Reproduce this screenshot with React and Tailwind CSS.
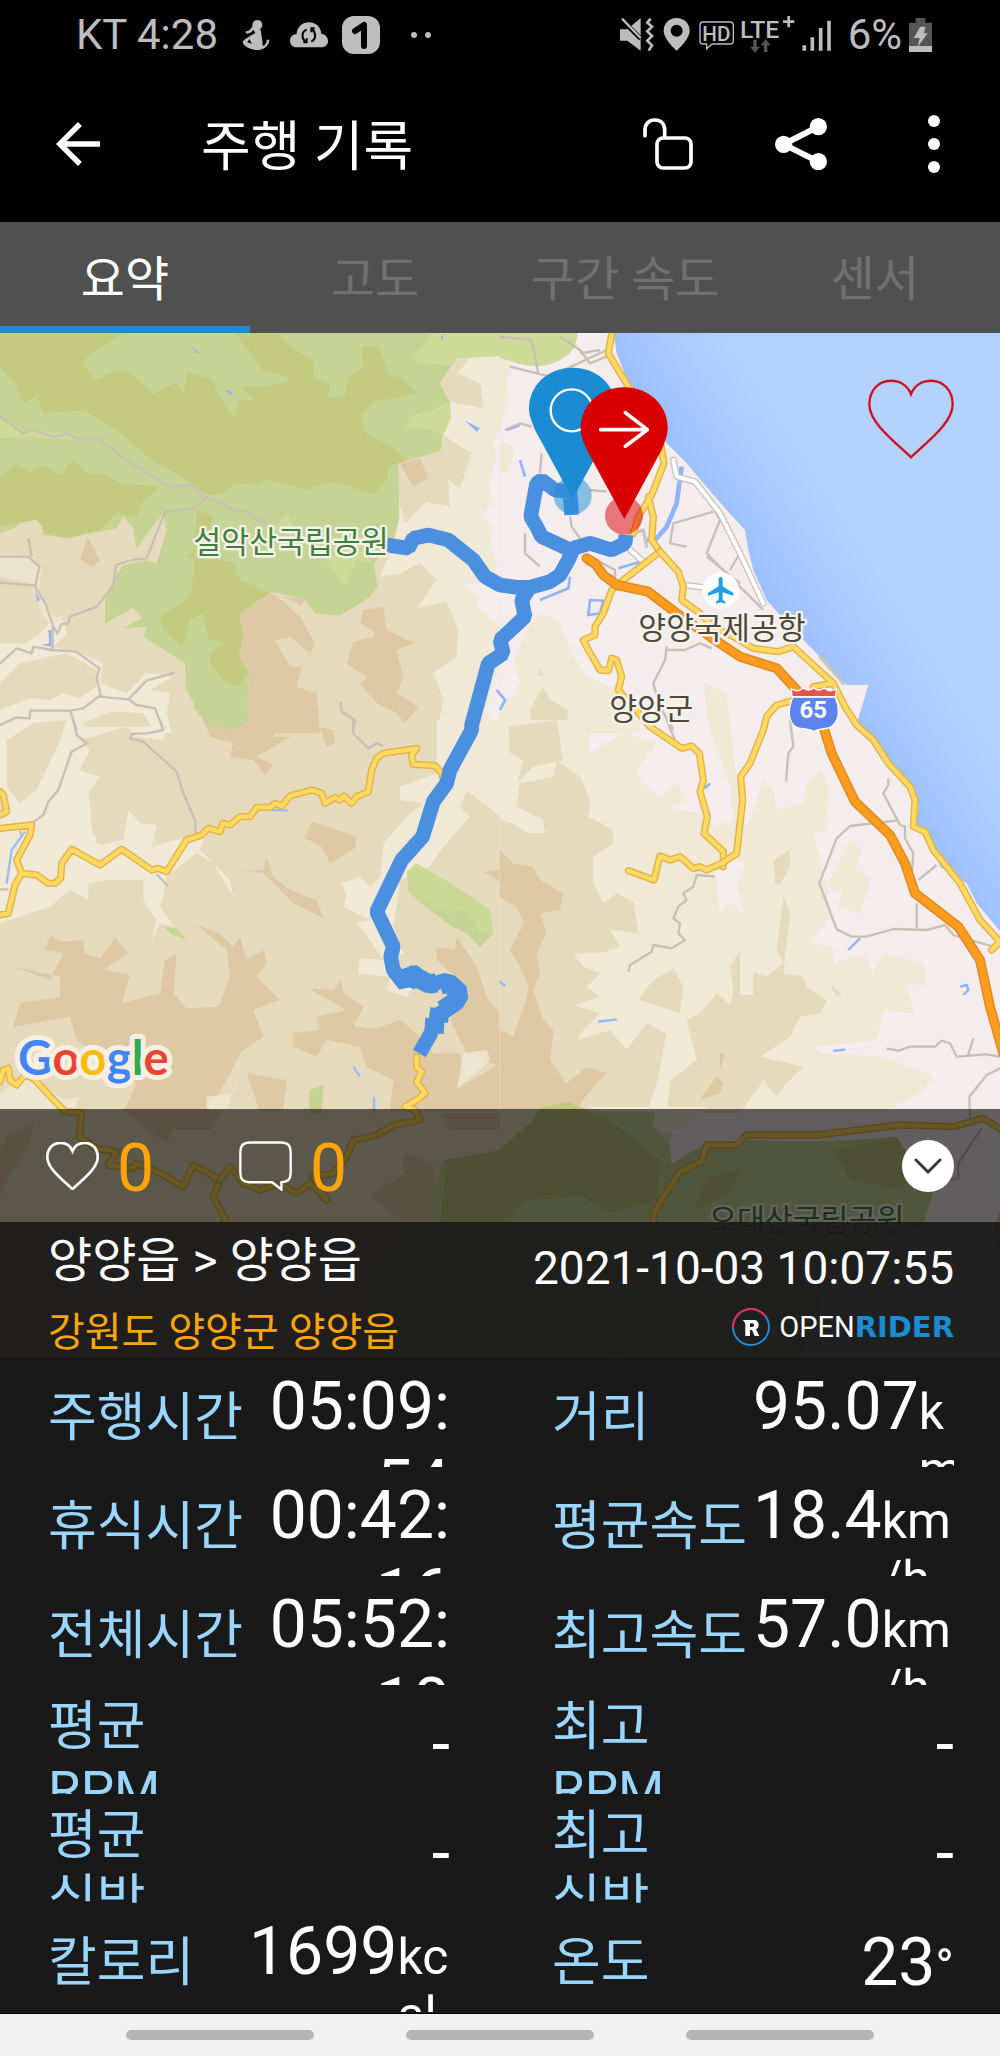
import React, { useState } from 'react';
import { MdArrowBack } from 'react-icons/md';

const tabs = ['요약', '고도', '구간 속도', '센서'];

const stats = [
  { label: '주행시간', value: '05:09:54' },
  { label: '거리', value: '95.07', unit: 'km' },
  { label: '휴식시간', value: '00:42:16' },
  { label: '평균속도', value: '18.4', unit: 'km/h' },
  { label: '전체시간', value: '05:52:10' },
  { label: '최고속도', value: '57.0', unit: 'km/h' },
  { label: '평균 RPM', value: '-' },
  { label: '최고 RPM', value: '-' },
  { label: '평균 심박', value: '-' },
  { label: '최고 심박', value: '-' },
  { label: '칼로리', value: '1699', unit: 'kcal' },
  { label: '온도', value: '23', unit: '°' },
];

const heartPath =
  'M128 232C80 186 4 130 4 75C4 32 32 4 68 4C95 4 118 18 128 44C138 18 161 4 188 4C224 4 252 32 252 75C252 130 176 186 128 232Z';

function StatusBar() {
  return (
    <div className="flex h-[70px] items-center justify-between pr-[68px] pl-[76px] text-[42px] leading-[50px] text-[#bdbdbd]">
      <div className="flex items-center">
        <span className="mr-6">KT 4:28</span>
        <svg className="mr-5 h-8 w-7" viewBox="0 0 84 96" fill="currentColor" aria-hidden="true">
          <circle cx="46" cy="18" r="15" />
          <path d="M36 14C26 34 20 34 10 38L14 44C26 42 30 38 34 32L40 42C22 52 4 62 2 70C4 80 20 92 46 93C64 93 82 80 82 62L74 62C74 74 68 80 62 80C62 66 58 46 56 34Z" />
          <path d="M22 60L30 74L16 70Z" fill="#000" />
        </svg>
        <svg className="mr-[14px] h-[26px] w-[38px]" viewBox="0 0 114 76" fill="currentColor" aria-hidden="true">
          <path d="M22 75C8 75 0 66 0 55C0 44 8 36 20 35C20 14 38 0 57 0C76 0 92 13 94 34C106 36 114 44 114 56C114 68 104 75 92 75Z" />
          <path d="M50 22C34 28 34 48 46 58M40 60H50V48M64 58C80 50 78 30 66 20M74 18H64V30" fill="none" stroke="#000" strokeWidth="6" />
        </svg>
        <svg className="mr-[31px] h-[38px] w-[38px]" viewBox="0 0 38 38" aria-hidden="true">
          <rect width="38" height="38" rx="12" fill="currentColor" />
          <path d="M13 15L22 9V30" fill="none" stroke="#000" strokeWidth="6" strokeLinecap="round" strokeLinejoin="round" />
        </svg>
        <svg className="h-2 w-5" viewBox="0 0 20 8" fill="currentColor" aria-hidden="true">
          <circle cx="3" cy="4" r="3" />
          <circle cx="17" cy="4" r="3" />
        </svg>
      </div>
      <div className="flex items-center">
        <svg className="h-[38px] w-[228px]" viewBox="0 0 684 114" fill="currentColor" aria-hidden="true">
          <path d="M0 40H22L62 6V104L22 74H0Z" />
          <path d="M6 12L62 68" stroke="#000" strokeWidth="14" />
          <path d="M6 8L62 66" stroke="currentColor" strokeWidth="7" />
          <path d="M92 8L82 20L96 32L82 46L96 60L82 74L96 88L86 104" fill="none" stroke="currentColor" strokeWidth="8" />
          <path fillRule="evenodd" d="M170 6C148 6 131 22 131 44C131 70 170 104 170 104C170 104 209 70 209 44C209 22 192 6 170 6ZM170 26A18 18 0 1 1 170 62A18 18 0 1 1 170 26Z" />
          <path d="M248 18H330Q340 18 340 28V74Q340 84 330 84H276L260 98V84H248Q240 84 240 76V28Q240 18 248 18Z" fill="none" stroke="currentColor" strokeWidth="4" />
          <text x="247" y="74" fontSize="62" fontWeight="500">HD</text>
          <text x="360" y="65" fontSize="74" fontWeight="500">LTE</text>
          <path d="M506 0V34M489 17H523" stroke="currentColor" strokeWidth="8" />
          <path d="M400 72H410V92H420L405 110L390 92H400ZM432 108H442V88H452L437 70L422 88H432Z" fill="#555" />
          <path d="M553 88V104M577 64V104M602 36V104M627 14V104" stroke="currentColor" strokeWidth="11" />
        </svg>
        <span className="mr-[7px]">6%</span>
        <svg className="h-[34px] w-[23px]" viewBox="0 0 69 102" aria-hidden="true">
          <path d="M20 0H49V14H69V102H0V14H20Z" fill="#555" />
          <path d="M0 84H69V102H0Z" fill="#bdbdbd" />
          <path d="M34 26H50L44 46H56L26 86L32 60H14Z" fill="#bdbdbd" />
        </svg>
      </div>
    </div>
  );
}

function AppBar() {
  return (
    <header className="flex h-[152px] items-center pr-[33px] pb-1 pl-[45px]">
      <button type="button" aria-label="뒤로">
        <MdArrowBack className="h-[66px] w-[66px]" />
      </button>
      <h1 className="ml-[90px] flex-1 pt-2 text-[54px] leading-[64px]">주행 기록</h1>
      <div className="flex items-center gap-[66px]">
        <button type="button" aria-label="공개 설정" className="flex w-[67px] justify-center">
          <svg className="h-[52px] w-[50px]" viewBox="0 0 150 156" fill="none" stroke="currentColor" strokeWidth="11" strokeLinecap="round">
            <path d="M6 53V36C6 18 18 6 35 6C54 6 65 18 65 36V58" />
            <rect x="42" y="60" width="102" height="90" rx="18" />
          </svg>
        </button>
        <button type="button" aria-label="공유" className="flex w-[67px] justify-center">
          <svg className="h-[52px] w-[52px]" viewBox="0 0 156 156" fill="currentColor">
            <path d="M130 26L26 79L130 131" fill="none" stroke="currentColor" strokeWidth="18" />
            <circle cx="26" cy="79" r="26" />
            <circle cx="130" cy="26" r="26" />
            <circle cx="130" cy="131" r="26" />
          </svg>
        </button>
        <button type="button" aria-label="더보기" className="flex w-[67px] justify-center">
          <svg className="h-[58px] w-3" viewBox="0 0 12 58" fill="currentColor">
            <circle cx="6" cy="6" r="6" />
            <circle cx="6" cy="29" r="6" />
            <circle cx="6" cy="52" r="6" />
          </svg>
        </button>
      </div>
    </header>
  );
}

function Road({ d }) {
  return (
    <g>
      <path d={d} stroke="#e3b34c" strokeWidth="22" />
      <path d={d} stroke="#ffda62" strokeWidth="13" />
    </g>
  );
}

function RideMap() {
  return (
    <svg
      className="absolute inset-0 h-full w-full"
      viewBox="0 999 3000 3075"
      preserveAspectRatio="xMidYMin slice"
      role="img"
      aria-label="주행 경로 지도"
    >
      <defs>
        <linearGradient id="sea" gradientUnits="userSpaceOnUse" x1="790" y1="795" x2="1070" y2="615">
          <stop offset="0" stopColor="#9bbefe" />
          <stop offset=".5" stopColor="#a9caff" />
          <stop offset="1" stopColor="#b3d2ff" />
        </linearGradient>
      </defs>
      <rect y="990" width="3000" height="3100" fill="#e6dabc" />
      <rect x="1500" y="990" width="1500" height="3100" fill="#f5ecee" />

      {/* terrain, north west */}
      <g transform="translate(0 990)">
        <path fill="#efe9d5" d="M1501 70L1380 85 1370 130 1440 160 1450 235 1352 215 1330 315 1415 370 1380 475 1345 450 1350 530 1280 515 1215 580 1198 520 1180 640 1140 740 1200 730 1260 700 1310 750 1250 835 1340 815 1375 900 1370 980 1300 1030 1330 1110 1310 1210H1501Z" />
        <path fill="#f5ecee" d="M1501 300L1480 330 1490 380 1465 470 1480 510 1445 560 1480 590 1470 650 1490 690 1480 750 1390 765 1440 800 1430 830 1501 890ZM1501 1000L1470 1090 1460 1140 1475 1180 1501 1200Z" />
        <path fill="#efe9d5" d="M0 940L80 940 130 900 150 880 190 870 200 910 160 950 230 965 310 1000 300 1060 380 1090 440 1030 520 1040 450 1080 510 1090 500 1150 515 1210H0Z" />
        <path fill="#efe9d5" d="M0 670L100 680 125 720 115 780 160 860 190 860 170 900 130 860 90 760 0 740Z" opacity=".6" />
        <path fill="#e6dabc" d="M0 1060L60 1000 200 970 290 1020 290 1070 240 1105 190 1090 150 1110 90 1105 0 1140ZM250 1180L330 1145 430 1150 460 1200H250Z" />
        <path fill="#c5d394" d="M0 5H1501V78L1370 85 1320 160 1350 215 1352 265 1330 300 1322 362 1195 400 1198 560 1180 640 1120 700 1133 770 1110 800 1020 857 945 850 910 805 815 787 715 855 732 915 715 980 748 1030 740 1130 745 1170 700 1228 640 1210 580 1130 600 1085 558 1080 556 1000 540 990 430 920 440 890 370 895 428 865 400 833 315 880 315 810 345 740 370 705 440 690 470 700 500 600 490 550 450 600 410 655 398 590 368 560 350 595 295 605 200 625 130 615 120 565 75 550 50 590 0 610Z" />
        <path fill="#c4ca80" d="M0 5H380L260 80 250 105 285 150 340 125 370 115 460 190 530 155 550 190 560 125 640 150 650 180 690 250 705 262 720 210 765 210 720 170 780 170 865 155 860 140 790 125 765 85 700 5H830L850 30 900 70 940 90 940 140 990 165 985 205 1035 195 1045 140 1090 115 1085 50 1130 45 1150 80 1160 130 1210 150 1250 185 1200 205 1130 210 1080 260 1100 310 1190 360 1220 390 1165 410 1160 450 1120 495 1050 470 990 455 920 480 850 460 800 450 770 465 710 460 660 495 620 495 540 435 470 400 350 300 250 240 130 250 110 200 70 220 50 170 0 110Z" />
        <path fill="#c5d394" d="M380 5L260 80 250 105 285 150 340 125 370 115 460 190 530 155 550 190 560 125 640 150 700 100 765 85 700 5Z" />
        <path fill="#c4ca80" d="M0 440L50 400 90 430 130 405 180 435 220 390 260 430 310 430 360 460 480 470 430 510 410 560 350 550 300 600 200 625 140 610 110 570 50 580 0 590Z" />
        <path fill="#c4ca80" d="M590 540L640 560 620 620 560 680 650 690 700 700 720 750 810 790 720 850 730 920 715 980 748 1025 700 1090 630 1000 625 950 600 860 570 880 555 960 490 900 480 860 570 800 580 740Z" />
        <path fill="#c5d394" d="M610 850L625 930 680 940 625 970 640 1040 710 1070 745 1040 740 1130 745 1170 700 1228 630 1210 560 1080 550 940 570 870Z" />
        <path fill="#cddb97" d="M1501 5H1280L1300 20 1235 80 1260 100 1350 105 1370 85 1501 78ZM1350 220L1230 260 1215 300 1260 290 1330 315 1352 265ZM0 260L70 300 200 310 230 330 70 320 0 325ZM860 550L820 600 900 620ZM975 690L1035 765 1070 690 1120 700 1060 640Z" />
        <path fill="#dec9a4" d="M815 790L850 815 900 860 945 940 930 970 870 920 825 930 870 1010 905 1010 890 1070 950 1090 960 1210H640L700 1228 745 1170 740 1130 748 1030 715 980 732 915 715 855Z" />
        <path fill="#dec9a4" d="M1090 840L1150 830 1160 900 1245 940 1190 960 1210 1040 1190 1090 1255 1130 1215 1180 1190 1150 1130 1120 1080 1060 1100 1040 1040 1000 1060 935 1120 920 1125 905 1080 880ZM1200 400L1260 385 1285 445 1240 470ZM262 620L300 690 275 710 240 690ZM850 800L915 805 905 825Z" />
        <path fill="#e6dabc" d="M1370 85L1320 160 1345 210 1447 235 1440 170 1370 130 1410 85Z" />
        <path fill="#8fb2f5" d="M405 15L440 35 420 25ZM575 50L598 68 590 70ZM625 90L645 105ZM675 180L700 188 690 195ZM1395 272L1440 295 1430 305ZM105 780L120 810 112 815ZM145 900L155 900 155 950 125 945 148 940ZM1330 10L1328 30 1322 25Z" />
      </g>

      {/* terrain, north east */}
      <g transform="translate(1500 990)">
        <path fill="#cddb97" d="M-1 5H230C240 60 180 110 100 108C60 105 20 90 -1 85Z" />
        <path fill="#efe9d5" d="M-1 80L40 105 20 150 25 220 0 290ZM0 330L40 350 30 420 0 430ZM120 850L175 870 220 980 260 1040 380 1090 360 1170 420 1210H-1V1120L40 1100 60 1060 40 990 80 900Z" />
        <path fill="#efe9d5" d="M610 1060L680 1090 690 1210H630Z" />
        <path fill="#e6dabc" d="M130 1070L150 1110 205 1140 195 1210H100L90 1140ZM120 1010L130 1040 115 1035Z" />
        <path fill="url(#sea)" d="M340 5H1510V1815L1430 1720 1400 1660 1320 1610 1300 1540 1250 1480 1255 1430 1230 1370 1165 1300 1120 1230 1070 1180 1080 1150 1105 1065 1040 1065 960 980 880 900 800 810 760 720 745 660 735 600 680 540 610 460 560 400 500 340 390 170 350 70Z" />
        <g fill="none" stroke="#8eb4fb" strokeWidth="8">
          <path d="M545 410L530 520 500 590 470 625 440 630" strokeWidth="14" />
          <path d="M210 740L205 775 120 810M270 810L310 812 300 850 265 855ZM355 715L440 690M60 390L75 440M20 300L60 285M-10 1080L15 1110 0 1140" />
        </g>
      </g>

      {/* terrain, south west */}
      <g transform="translate(0 2160)">
        <path fill="#efe9d5" d="M0 20L500 20 490 60 400 50 335 100 270 90 240 150 300 170 270 220 275 330 300 375 370 360 385 270 420 310 470 315 455 380 560 350 620 340 600 390 690 480 700 530 640 430 590 400 500 470 490 530 480 560 520 620 480 610 455 665 470 600 430 540 430 480 330 480 265 490 265 540 210 510 150 560 0 610Z" />
        <path fill="#e6dabc" d="M20 60L100 10 200 0 180 60 110 210 60 250 20 200ZM240 60L380 20 440 90 520 150 540 200 500 320 460 290 380 260 360 360 290 370 265 220 300 170 240 150 270 90ZM0 310L10 230 0 210Z" />
        <path fill="#efe9d5" d="M1501 0V290L1400 210 1380 260 1410 290 1330 380 1290 440 1200 480 1190 560 1180 620 1210 700 1170 720 1180 770 1250 790 1220 830 1160 810 1170 770 1075 760 1080 715 1150 720 1110 660 1070 610 1110 600 1030 560 1040 530 1025 490 1080 470 1110 500 1140 470 1150 370 1230 280 1270 250 1200 240 1200 200 1310 160 1310 0Z" />
        <path fill="#dec9a4" d="M40 740L150 780 190 700 135 690 150 645 180 665 250 660 255 700 300 715 345 655 385 700 310 750 390 765 365 850 480 820 495 720 530 700 520 820 560 865 655 860 690 770 680 690 590 615 660 640 700 680 720 650 740 720 790 690 800 730 770 770 840 840 760 870 790 950 720 1000 680 1080 620 1175H370L410 1090 230 960 210 890 40 920 60 850 180 830 180 770Z" />
        <path fill="#dec9a4" d="M935 305L1070 350 1065 385 990 430 965 380 915 355ZM730 450L790 450 800 410 820 470 870 510 950 540 970 595 880 550 820 490 790 460ZM620 20L830 0 820 50 870 50 770 110 820 135 795 165 760 120 690 110 700 70 630 50ZM960 20L1000 30 1005 70 980 80ZM1450 455L1501 450V485Z" />
        <path fill="#dec9a4" d="M925 805L1000 810 1025 780 1030 820 1090 860 1060 920 1130 925 1200 900 1250 940 1300 1000 1380 1000 1400 1090 1501 1030V1175H1170L1180 1080 1100 1040 1080 980 980 960 950 1010 880 980 880 940 960 930 950 890 1040 870ZM1310 680L1365 690 1370 650 1430 740 1460 830 1501 880V1040L1400 1000 1350 900 1400 800 1310 720ZM740 1060L860 1080 850 1175H780Z" />
        <path fill="#efe9d5" d="M0 1120L90 1060 190 1140 240 1130 220 1175H0ZM620 1130L700 1120 720 1040 680 1175H620ZM1390 1000L1460 990 1470 1020 1370 1110Z" opacity=".8" />
        <path fill="#cbd997" d="M1250 430L1400 520 1470 570 1480 640 1440 680 1400 640 1350 615 1260 550 1225 515 1220 455Z" />
        <path fill="#c5d394" d="M1260 540L1340 580 1400 570 1440 640 1480 640 1440 680 1400 640 1350 615ZM490 620L530 625 560 660 520 645ZM930 1110L970 1095 965 1180H925ZM620 0H740C720 35 660 35 620 0Z" />
        <path fill="none" stroke="#9cbcf5" strokeWidth="7" d="M75 335L35 390 20 490M1060 1040L1080 1070M1122 1130V1180M815 270L865 272" />
      </g>

      {/* terrain, south east */}
      <g transform="translate(1500 2160)">
        <path fill="#efe9d5" d="M-1 20L270 0 270 100 300 80 370 40 470 70 410 150 430 190 480 230 530 190 560 240 510 265 600 280 650 320 700 300 690 200 640 60 630 0 690 0 700 100 720 250 740 330 790 180 820 210 830 270 910 250 920 190 960 150 985 200 980 330 940 340 980 500 990 590 930 670 1000 680 1000 730 1100 700 1120 760 1150 700 1270 730 1280 800 1220 790 1240 880 1150 870 1130 960 945 980 960 1000 1150 1010 1300 1070 1270 1110 1150 1180H-1ZM1050 360L1085 390 1065 450 1115 470 1080 580 1010 560 1030 520 980 500Z" />
        <path fill="#efe9d5" d="M-1 0H420V30H-1Z" />
        <path fill="#f5ecee" d="M645 460L700 420 735 430 710 500 730 580 690 550 660 580Z" />
        <path fill="#e6dabc" d="M-1 300L40 310 80 340 135 340 130 300 50 260 60 190 160 170 170 120 240 170 270 240 265 290 340 330 340 370 280 410 280 490 310 550 350 520 400 545 415 640 330 630 360 680 300 700 220 700 250 740 300 760 260 800 300 830 220 855 300 880 240 940 235 960 330 930 380 990 440 910 500 940 470 1090 440 1180H-1ZM25 20L170 0 190 120 100 140 50 190 70 120 30 100Z" />
        <path fill="#e6dabc" d="M500 1180L510 1080 590 1020 560 900 600 880 650 820 690 855 700 820 690 740 720 690 720 825 760 825 760 755 800 770 850 730 830 690 850 530 870 580 850 760 910 770 920 800 980 840 960 880 900 890 870 950 780 1010 910 1040 860 1090 830 1130 790 1080 720 1180ZM415 840L460 780 520 745 550 800 540 880ZM820 420L870 390 870 440 840 495 825 490ZM990 795L1025 820 1010 830Z" />
        <path fill="#dec9a4" d="M-1 390L40 430 100 440 120 480 190 520 180 570 120 580 140 640 110 700 120 760 100 810 130 900 160 930 150 1020 200 1090 260 1040 320 1060 280 1100 220 1180H-1V930L40 950 75 850 85 800 60 740 30 690 70 610 50 560 -1 530ZM660 1000L675 1000 660 1050ZM600 1140L650 1070 670 1090 660 1120Z" />
        <path fill="none" stroke="#8eb4fb" strokeWidth="7" d="M1080 655L1045 690M1380 800L1400 795 1405 810 1390 825M295 905L350 898M1000 993L1036 988M630 190L615 205M0 785L15 798" />
      </g>

      {/* terrain under the summary panel */}
      <g transform="translate(1500 3300)">
        <path fill="#e6dabc" d="M-1 30H520L510 140V800H-1Z" />
        <path fill="#dec9a4" d="M-1480 110L-1400 70 -1410 130 -1480 240 -1500 290V150ZM-1130 30H-830L-870 90 -980 90 -1000 130ZM-390 290L-290 220 -290 160 -200 190 -190 370 -280 370ZM-180 40H0V90L-150 90Z" />
        <path fill="#efe9d5" d="M260 20H620L560 80 500 100Z" />
        <path fill="#c8d896" d="M120 25L205 5 265 35 465 35 460 80 510 140 515 190 620 130 740 120 900 125 1050 120 1190 110 1250 200 1300 280 1270 370 1000 500 900 780H-320L-390 530 -200 350 -200 270 -170 180 0 150 100 60Z" />
        <path fill="#c0c97e" d="M120 25L205 5 330 60 480 180 470 300 330 340 250 290 80 300 0 370 -180 370 -160 180 0 150 100 60ZM1000 150L1190 110 1250 200 1200 270 1050 240ZM620 230L720 210 700 270 580 330Z" />
      </g>

      {/* minor roads */}
      <g fill="none" stroke="#c8bfb5" strokeWidth="7" strokeLinejoin="round">
        <path transform="translate(0 990)" d="M0 260L70 310 95 300 160 320 205 312 225 325 295 325 370 385 490 460 510 470 575 465 615 510 580 535 495 545 440 685 395 690 348 705 340 765 290 830 210 860 205 880 185 882 172 910 158 885 138 825 105 770 118 710 85 680 0 680M615 500L655 515 700 540 740 545 770 565 800 580M0 1000L50 955 95 970 100 950 155 960 228 965 298 1015 290 1045 302 1095 250 1135 210 1142 90 1142 90 1165 50 1162 0 1185M298 1100L385 1108 440 1052 525 1028M385 1108L410 1125 465 1135 490 1200M158 885V960M210 1142L230 1200M0 758L105 767M85 625L95 680M1022 1115L1025 1145 1065 1170 1058 1200" />
        <path transform="translate(1500 990)" d="M0 20L50 25 95 30 115 130M180 20L240 60 270 100 320 80M30 110L150 140 320 60M240 70L300 60M15 300L60 280 95 290M125 370L120 430M210 560L215 590 250 640 270 650M270 480L320 485M75 610L75 670 120 710M290 690L345 720V760M255 700L340 740M640 545L520 580 510 640 560 650M645 545L660 570 620 670 790 840M620 680L720 760M690 720L720 670M500 950L495 990 460 1060 480 1130 520 1200M500 960L555 960 600 940 635 955" />
        <path transform="translate(0 2160)" d="M220 0L230 45 262 70 215 95 175 210 145 245 130 285 95 310M480 0L490 30 440 40 395 42 390 55 430 65 530 155 550 220 585 300 587 340M1060 0L1060 40 1105 85 1130 70 1150 78M470 462L505 500M0 508L25 508M60 330L65 350" />
        <path transform="translate(1500 2160)" d="M500 0L525 60M870 0L880 80 865 100 858 185M1165 175L1165 195 1150 220 1200 315 1215 320 1215 355 1240 400 1235 470M1190 302L1050 318 1010 355 958 490 1010 628 1055 650 1100 650 1180 627 1280 630 1335 615 1360 645 1480 680M1250 550V628M1255 480L1310 435M645 470L590 465 580 500 550 520 560 540 535 560 520 595 540 610 535 640 555 660 515 685 460 675 455 695 390 735 385 755M1160 985L1195 992 1230 980 1305 980 1325 962 1350 970 1370 1010 1460 1003 1510 1012M1420 955L1403 1010M1510 1040L1460 1065 1408 1130 1410 1200M1445 1225L1375 1330 1375 1375 1350 1380" />
      </g>

      {/* main roads */}
      <g fill="none" strokeLinejoin="round" strokeLinecap="round">
        <g transform="translate(1500 990)">
          <path d="M520 390L530 440 585 455 660 550 720 670 790 820M380 650L430 695M550 765L610 772" stroke="#c9c4ba" strokeWidth="20" />
          <path d="M520 390L530 440 585 455 660 550 720 670 790 820M380 650L430 695M550 765L610 772" stroke="#fff" strokeWidth="12" />
          <path d="M375 620L430 600 440 650M960 980L1030 1060" stroke="#cbc5ba" strokeWidth="10" />
          <Road d="M337 0L325 70 385 170 480 330 492 400 455 495 415 560 400 610M445 500L460 560 455 630 480 665 370 750 335 780 310 850 285 890 285 915 250 930 265 960 300 1020 325 1022 335 985 350 990 365 1040 355 1080 400 1130 450 1190 545 1255 575 1248 598 1270 610 1350 600 1385 622 1460 612 1510 670 1565 670 1610" />
          <Road d="M480 665L535 725 550 770 545 810 600 850 640 890 700 920 760 955 835 965 880 950 1000 1060 1035 1130 1070 1185 1120 1230 1165 1300 1230 1370 1245 1410 1240 1490 1275 1505 1300 1560 1380 1660 1440 1770 1500 1835 1475 1860M1000 1060L940 1070" />
          <Road d="M885 1110L830 1125 800 1160 790 1200 750 1300 722 1340 728 1410 710 1570 665 1600 620 1620 600 1610 580 1615 540 1580 510 1590 480 1578 462 1650 385 1622" />
          <path d="M260 685L285 700 310 735 350 765 445 785 530 850 660 940 720 980 830 1015 890 1080 970 1190 995 1270 1065 1415 1170 1515 1215 1600 1245 1690 1375 1790 1440 1890 1470 2030 1510 2170" stroke="#dc8b20" strokeWidth="30" />
          <path d="M260 685L285 700 310 735 350 765 445 785 530 850 660 940 720 980 830 1015 890 1080 970 1190 995 1270 1065 1415 1170 1515 1215 1600 1245 1690 1375 1790 1440 1890 1470 2030 1510 2170" stroke="#ff9c1f" strokeWidth="21" />
        </g>
        <g transform="translate(0 2160)">
          <Road d="M0 325L95 315 90 345 50 420 65 460 45 495 25 580 0 585M65 460L110 465 145 490 165 490 182 475 185 430 215 388 300 435 365 388 455 450 475 445 500 455 560 360 605 345 625 325 660 335 668 310 690 315 720 290 750 290 770 262 810 262 825 250 845 258 870 228 935 210 965 220 975 250 1005 232 1020 240 1032 228 1055 250 1070 230 1105 215 1115 150 1130 115 1150 100 1250 85 1235 105 1240 133 1305 137 1325 160 1330 180M0 215L10 225 20 275 0 285" />
          <Road d="M0 1085L10 1050 25 1045 30 1080 50 1095 75 1065 100 1075 195 1175 245 1178 238 1250 290 1285 350 1295 325 1335 400 1345 410 1330 480 1360 550 1400 580 1335 660 1380 640 1430 680 1505 610 1540 550 1690 530 1790 470 1920" />
          <Road d="M1250 1010L1250 1040 1265 1055 1250 1085 1275 1120 1250 1140 1215 1160 1245 1170 1260 1200 1180 1215 1130 1245 1060 1260 1040 1310 1000 1360 940 1370 980 1440 930 1390 890 1420 840 1390 780 1410 730 1390 690 1340 660 1380" />
        </g>
        <g transform="translate(1500 3300)">
          <Road d="M1510 92L1450 55 1360 80 1200 75 950 105 740 105 710 135 620 135 605 185 540 215 465 330 450 430 400 600 345 700 360 780M1510 340L1490 400 1510 440" />
        </g>
      </g>

      {/* ridden route */}
      <g fill="none" stroke="#4a8fe0" strokeWidth="44" strokeLinejoin="bevel">
        <path transform="translate(1500 990)" d="M-340 645L-275 655 -260 625 -215 615 -155 630 -80 690 -45 740 0 765 50 772 90 772 150 755 180 735 205 690 220 655 270 640 335 660 375 640 378 615M215 555L210 485 165 480 125 450 110 460 92 560 110 590 125 620 215 662M90 772L65 810 75 860 0 930 10 970 -35 1000 -85 1185 -85 1200 -150 1320 -160 1360 -200 1415 -232 1520 -295 1590 -370 1745 -320 1850 -328 1880 -320 1920 -285 1965 -275 1925 -205 1965 -165 1950 -120 1985 -150 2030 -180 2050 -200 2090 -210 2115 -242 2170" />
        <path transform="translate(1500 990)" d="M-283 1968L-268 1928 -245 1945 -212 1962 -190 1958M-180 1965L-155 1958 -120 1990 -135 2015 -172 2040M-180 2035L-185 2075M-195 2065L-198 2110" strokeWidth="58" />
      </g>

      {/* place names */}
      <g fontSize="91" stroke="#f7f2ea" strokeWidth="14" strokeLinejoin="round" paintOrder="stroke">
        <text x="580" y="1660" fill="#3f7f3c">설악산국립공원</text>
        <text x="1915" y="1916" fill="#4a4a3e">양양국제공항</text>
        <text x="1828" y="2160" fill="#4a4a3e">양양군</text>
        <text x="2127" y="3692" fill="#3f7f3c">오대산국립공원</text>
      </g>

      <g transform="translate(1500 990)">
        <circle cx="662" cy="781" r="55" fill="#fff" />
        <path transform="translate(616 733) scale(4)" fill="#1e9fe8" d="M21 16v-2l-8-5V3.5c0-.83-.67-1.5-1.5-1.5S10 2.67 10 3.5V9l-8 5v2l8-2.5V19l-2 1.5V22l3.5-1 3.5 1v-1.5L13 19v-5.5l8 2.5z" />
        <g stroke="#fff" strokeWidth="8" paintOrder="stroke">
          <path fill="#5b84ee" d="M880 1103H1004C1020 1140 1016 1180 985 1192C965 1196 950 1196 941 1202C932 1196 915 1196 895 1192C866 1180 864 1140 880 1103Z" />
          <path fill="#e5534f" d="M876 1080Q895 1090 910 1076Q925 1088 941 1076Q957 1088 972 1076Q988 1090 1007 1080L1005 1098H878Z" />
        </g>
        <text x="940" y="1165" textAnchor="middle" fontSize="72" fontWeight="700" fill="#fff">65</text>

        <circle cx="218" cy="497" r="57" fill="#1b8cd3" opacity=".5" />
        <path fill="#1b8cd3" d="M218 508L105 300C93 270 87 255 87 235C87 165 145 113 218 113C290 113 348 165 348 235C348 255 342 270 330 300Z" />
        <circle cx="215" cy="241" r="63" fill="none" stroke="#fff" strokeWidth="7" />
        <circle cx="372" cy="557" r="57" fill="#d80000" opacity=".5" />
        <path transform="translate(155 59)" fill="#d80000" d="M218 508L105 300C93 270 87 255 87 235C87 165 145 113 218 113C290 113 348 165 348 235C348 255 342 270 330 300Z" />
        <path d="M302 299H442M376 248L442 299L376 349" fill="none" stroke="#fff" strokeWidth="11" strokeLinecap="round" strokeLinejoin="round" />
      </g>

      <g fontFamily="Lato" fontWeight="700" fontSize="142" stroke="#f5efe2" strokeWidth="30" strokeLinejoin="round" paintOrder="stroke">
        <text x="54" y="3226">
          <tspan fill="#4285f4">G</tspan>
          <tspan fill="#ea4335">o</tspan>
          <tspan fill="#fbbc05">o</tspan>
          <tspan fill="#4285f4">g</tspan>
          <tspan fill="#34a853">l</tspan>
          <tspan fill="#ea4335">e</tspan>
        </text>
      </g>
    </svg>
  );
}

function Logo() {
  return (
    <div className="flex items-center text-[29px] leading-[38px]">
      <svg className="mr-[9px] h-[38px] w-[38px]" viewBox="0 0 114 114" aria-hidden="true">
        <circle cx="57" cy="57" r="54" fill="none" stroke="#1b8cd3" strokeWidth="6" />
        <path d="M3 60A54 54 0 0 1 101 26" fill="none" stroke="#e5294f" strokeWidth="6" />
        <path d="M32 36H68Q80 38 80 52Q80 60 72 64L82 84H68L60 66H54V84H40V48Q38 40 32 36ZM54 46V57H62Q66 56 66 51Q66 47 62 46Z" fill="#fff" fillRule="evenodd" />
      </svg>
      <span>OPEN</span>
      <span className="font-['DejaVu_Sans'] font-bold text-[#1b8cd3]">RIDER</span>
    </div>
  );
}

function Stat({ label, value, unit }) {
  return (
    <div className="flex h-[99px] overflow-hidden">
      <dt className="flex w-1/2 [align-items:safe_center] text-[53px] leading-[64px] break-keep text-[#99d5ff]">
        <span>{label}</span>
      </dt>
      <dd className="flex w-1/2 justify-end [align-items:safe_center]">
        <div className="flex min-w-0 items-baseline">
          <span className={unit ? 'shrink-0 text-[66px] leading-[78px]' : 'text-right text-[66px] leading-[78px] break-all'}>
            {value}
          </span>
          {unit && <span className="min-w-0 text-[50px] leading-[58px] [line-break:anywhere]">{unit}</span>}
        </div>
      </dd>
    </div>
  );
}

export default function App() {
  const [active, setActive] = useState(0);
  const [liked, setLiked] = useState(false);

  return (
    <div className="bg-[#191919] font-[Roboto,'Noto_Sans_CJK_KR',sans-serif] text-white">
      <div className="bg-black">
        <StatusBar />
        <AppBar />
      </div>

      <nav className="grid h-[111px] grid-cols-4 bg-[#505050]">
        {tabs.map((tab, index) => (
          <button
            key={tab}
            type="button"
            onClick={() => setActive(index)}
            className={
              index === active
                ? 'border-b-[7px] border-[#1b8cd3] pt-3 text-[48px] leading-[64px]'
                : 'border-b-[7px] border-transparent pt-3 text-[48px] leading-[64px] text-[#707070]'
            }
          >
            {tab}
          </button>
        ))}
      </nav>

      <section className="relative overflow-hidden">
        <RideMap />
        <div className="relative flex h-[776px] items-start justify-end p-[46px]">
          <button type="button" aria-label="좋아요" aria-pressed={liked} onClick={() => setLiked(!liked)}>
            <svg className="h-20 w-[86px]" viewBox="0 0 256 236" fill={liked ? '#d01020' : 'none'} stroke="#d01020" strokeWidth="7">
              <path d={heartPath} />
            </svg>
          </button>
        </div>

        <div className="relative bg-black/60">
          <div className="flex h-[113px] items-center justify-between px-[46px]">
            <div className="flex items-center gap-[85px] text-[66px] leading-[78px] text-[#ffa50a]">
              <button type="button" className="flex items-center gap-[18px]">
                <svg className="h-12 w-[53px]" viewBox="0 0 256 236" fill="none" stroke="#fff" strokeWidth="13" aria-hidden="true">
                  <path d={heartPath} />
                </svg>
                <span className="pt-[6px]">0</span>
              </button>
              <button type="button" className="flex items-center gap-[18px]">
                <svg className="h-[50px] w-[53px]" viewBox="0 0 160 150" fill="none" stroke="#fff" strokeWidth="7" aria-hidden="true">
                  <path d="M32 4H128Q156 4 156 32V96Q156 124 128 124V146L100 124H32Q4 124 4 96V32Q4 4 32 4Z" />
                </svg>
                <span className="pt-[6px]">0</span>
              </button>
            </div>
            <button type="button" aria-label="접기" className="flex h-[52px] w-[52px] items-center justify-center rounded-full bg-white">
              <svg className="h-4 w-7" viewBox="0 0 28 16" fill="none" stroke="#3a3a3a" strokeWidth="3" strokeLinecap="round">
                <path d="M2 2L14 14L26 2" />
              </svg>
            </button>
          </div>

          <div className="flex h-[136px] justify-between bg-[#191919]/90 pr-[46px] pl-12">
            <div className="pt-[3px]">
              <h2 className="text-[48px] leading-[72px]">양양읍 &gt; 양양읍</h2>
              <p className="text-[40px] leading-[72px] text-[#ffa50a]">강원도 양양군 양양읍</p>
            </div>
            <div className="flex flex-col items-end gap-2 pt-[14px]">
              <time className="text-[46px] leading-[64px]">2021-10-03 10:07:55</time>
              <Logo />
            </div>
          </div>
        </div>
      </section>

      <dl className="grid h-[655px] grid-cols-2 content-start gap-x-[102px] gap-y-[10px] overflow-hidden pt-[10px] pr-[46px] pl-12">
        {stats.map((stat) => (
          <Stat key={stat.label} {...stat} />
        ))}
      </dl>

      <div className="flex h-[43px] items-center justify-center gap-[92px] border-t border-black bg-[#f1f1f1]">
        <button type="button" aria-label="최근 앱" className="h-[10px] w-[188px] rounded-full bg-[#b4b4b4]" />
        <button type="button" aria-label="홈" className="h-[10px] w-[188px] rounded-full bg-[#b4b4b4]" />
        <button type="button" aria-label="이전" className="h-[10px] w-[188px] rounded-full bg-[#b4b4b4]" />
      </div>
    </div>
  );
}
